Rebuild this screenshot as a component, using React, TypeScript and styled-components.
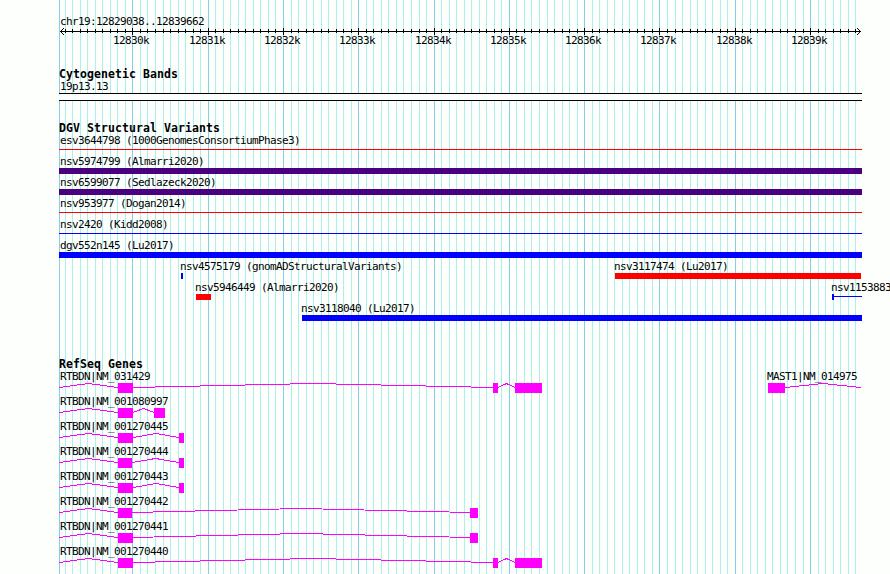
import styled, { createGlobalStyle } from "styled-components"

const REGION_START = 12829038
const REGION_LENGTH = 10625
const PANEL_LEFT = 59
const PANEL_WIDTH = 803

// panel-relative x of a base position
const toX = (position: number) => Math.round(((position - REGION_START) * 800) / REGION_LENGTH) + 1

const ticks = Array.from({ length: 106 }, (_, i) => {
  const position = 12829100 + i * 100
  return { position, x: toX(position), major: position % 1000 === 0 }
})

type Variant = { label: string; start: number; end: number; color: string; thin?: boolean; capped?: boolean }

const variantRows: Variant[][] = [
  [{ label: "esv3644798 (1000GenomesConsortiumPhase3)", start: 0, end: 803, color: "#ff0000", thin: true }],
  [{ label: "nsv5974799 (Almarri2020)", start: 0, end: 803, color: "#4b0082" }],
  [{ label: "nsv6599077 (Sedlazeck2020)", start: 0, end: 803, color: "#4b0082" }],
  [{ label: "nsv953977 (Dogan2014)", start: 0, end: 803, color: "#ff0000", thin: true }],
  [{ label: "nsv2420 (Kidd2008)", start: 0, end: 803, color: "#0000ff", thin: true }],
  [{ label: "dgv552n145 (Lu2017)", start: 0, end: 803, color: "#0000ff" }],
  [
    { label: "nsv4575179 (gnomADStructuralVariants)", start: 122, end: 124, color: "#0000ff" },
    { label: "nsv3117474 (Lu2017)", start: 556, end: 802, color: "#ff0000" },
  ],
  [
    { label: "nsv5946449 (Almarri2020)", start: 137, end: 152, color: "#ff0000" },
    { label: "nsv1153883", start: 773, end: 803, color: "#0000ff", thin: true, capped: true },
  ],
  [{ label: "nsv3118040 (Lu2017)", start: 243, end: 803, color: "#0000ff" }],
]

type Gene = { label: string; start: number; end: number; exons: [number, number][] }

const geneRows: Gene[][] = [
  [
    { label: "RTBDN|NM_031429", start: 0, end: 483, exons: [[59, 74], [434, 439], [456, 483]] },
    { label: "MAST1|NM_014975", start: 709, end: 802, exons: [[709, 726]] },
  ],
  [{ label: "RTBDN|NM_001080997", start: 0, end: 106, exons: [[59, 74], [95, 106]] }],
  [{ label: "RTBDN|NM_001270445", start: 0, end: 125, exons: [[59, 74], [120, 125]] }],
  [{ label: "RTBDN|NM_001270444", start: 0, end: 125, exons: [[59, 73], [120, 125]] }],
  [{ label: "RTBDN|NM_001270443", start: 0, end: 125, exons: [[59, 74], [120, 125]] }],
  [{ label: "RTBDN|NM_001270442", start: 0, end: 419, exons: [[59, 73], [411, 419]] }],
  [{ label: "RTBDN|NM_001270441", start: 0, end: 419, exons: [[59, 74], [411, 419]] }],
  [{ label: "RTBDN|NM_001270440", start: 0, end: 483, exons: [[59, 74], [434, 439], [456, 483]] }],
]

const gapBefore = (row: { start: number; end: number }[], index: number) =>
  row[index].start - (index > 0 ? row[index - 1].end : 0)

export default function App() {
  return (
    <Browser>
      <GlobalStyle />
      <GridLines />
      <Panel>
        <Ruler />
        <Track $space={18}>
          <TrackTitle>Cytogenetic Bands</TrackTitle>
          <Label $shift={1}>19p13.13</Label>
          <Band />
        </Track>
        <Track $space={21}>
          <TrackTitle>DGV Structural Variants</TrackTitle>
          {variantRows.map((row) => (
            <Row key={row[0].label} $height={21}>
              {row.map((variant, index) => (
                <Feature key={variant.label} $gap={gapBefore(row, index)} $width={variant.end - variant.start}>
                  <Label $shift={variant.start === 0 ? 1 : -1}>{variant.label}</Label>
                  <Bar $color={variant.color} $thin={variant.thin} $capped={variant.capped} />
                </Feature>
              ))}
            </Row>
          ))}
        </Track>
        <Track $space={35}>
          <TrackTitle>RefSeq Genes</TrackTitle>
          {geneRows.map((row) => (
            <Row key={row[0].label} $height={25}>
              {row.map((gene, index) => (
                <Feature key={gene.label} $gap={gapBefore(row, index)} $width={gene.end - gene.start}>
                  <Label $shift={gene.start === 0 ? 1 : -1}>{gene.label}</Label>
                  <GeneModel gene={gene} />
                </Feature>
              ))}
            </Row>
          ))}
        </Track>
      </Panel>
    </Browser>
  )
}

function GridLines() {
  return (
    <Grid width={PANEL_WIDTH} height={574} shapeRendering="crispEdges">
      <rect x={0} y={0} width={1} height={574} fill="#87ceeb" />
      {ticks.map(({ position, x, major }) => (
        <rect key={position} x={x} y={0} width={1} height={574} fill={major ? "#87ceeb" : "#afeeee"} />
      ))}
    </Grid>
  )
}

function Ruler() {
  const majors = ticks.filter(({ major }) => major)

  return (
    <RulerBlock>
      <Label $shift={1}>chr19:12829038..12839662</Label>
      <Axis width={PANEL_WIDTH} height={9} shapeRendering="crispEdges">
        <rect x={1} y={4} width={801} height={1} />
        <path d="M1.5 4.5 L5 1 M1.5 4.5 L5 8 M801.5 4.5 L798 1 M801.5 4.5 L798 8" stroke="#000" />
        {ticks.map(({ position, x, major }) => (
          <rect key={position} x={x} y={major ? 1 : 2} width={1} height={major ? 7 : 4} />
        ))}
      </Axis>
      <Numbers>
        {majors.map(({ position, x }, index) => (
          <TickNumber key={position} $gap={x - 19 - (index > 0 ? majors[index - 1].x + 17 : 0)}>
            {position / 1000}k
          </TickNumber>
        ))}
      </Numbers>
    </RulerBlock>
  )
}

function GeneModel({ gene }: { gene: Gene }) {
  const { start, end, exons } = gene
  const stops = [
    ...(start < exons[0][0] ? [[start, start] as [number, number]] : []),
    ...exons,
    ...(end > exons[exons.length - 1][1] ? [[end, end] as [number, number]] : []),
  ]

  return (
    <Model width={end - start} height={10} shapeRendering="crispEdges">
      {stops.slice(1).map((stop, index) => {
        const from = stops[index][1] - start
        const to = stop[0] - start
        return (
          <polyline
            key={from}
            points={`${from},4.5 ${(from + to) / 2},0.5 ${to},4.5`}
            fill="none"
            stroke="#ff00ff"
          />
        )
      })}
      {exons.map(([left, right]) => (
        <rect key={left} x={left - start} y={0} width={right - left} height={10} fill="#ff00ff" />
      ))}
    </Model>
  )
}

const GlobalStyle = createGlobalStyle`
  body {
    margin: 0;
    background: #fdfffc;
  }
`

const Browser = styled.div`
  position: relative;
  width: 890px;
  height: 574px;
  overflow: hidden;
  color: #000;
  background: #fdfffc;
`

const Grid = styled.svg`
  position: absolute;
  top: 0;
  left: ${PANEL_LEFT}px;
`

const Panel = styled.main`
  position: relative;
  display: flex;
  flex-direction: column;

  width: ${PANEL_WIDTH}px;
  padding: 15px 0 0 ${PANEL_LEFT}px;
`

const Label = styled.span<{ $shift: number }>`
  display: block;
  height: 13px;
  margin-left: ${({ $shift }) => $shift}px;

  font-family: "DejaVu Sans Mono", monospace;
  font-size: 11px;
  line-height: 14px;
  letter-spacing: -0.622px;
  white-space: pre;
`

const RulerBlock = styled.header`
  display: flex;
  flex-direction: column;
  height: 35px;
`

const Axis = styled.svg`
  display: block;
  flex: none;
  margin-top: -1px;
`

const Numbers = styled.div`
  display: flex;
  margin-top: -2px;
`

const TickNumber = styled.span<{ $gap: number }>`
  flex: none;
  width: 36px;
  margin-left: ${({ $gap }) => $gap}px;

  font-family: "DejaVu Sans Mono", monospace;
  font-size: 11px;
  line-height: 13px;
  letter-spacing: -0.622px;
`

const Track = styled.section<{ $space: number }>`
  display: flex;
  flex-direction: column;
  padding-top: ${({ $space }) => $space}px;
`

const TrackTitle = styled.h2`
  height: 12px;
  margin: 0;

  font-family: "DejaVu Sans Mono", monospace;
  font-size: 11.5px;
  font-weight: bold;
  line-height: 13px;
  letter-spacing: 0.077px;
  white-space: pre;
`

const Band = styled.div`
  height: 6px;
  border: solid #000;
  border-width: 1px 0;
  background: #fdfffc;
`

const Row = styled.div<{ $height: number }>`
  display: flex;
  height: ${({ $height }) => $height}px;
`

const Feature = styled.div<{ $gap: number; $width: number }>`
  display: flex;
  flex: none;
  flex-direction: column;

  width: ${({ $width }) => $width}px;
  margin-left: ${({ $gap }) => $gap}px;
`

const Bar = styled.div<{ $color: string; $thin?: boolean; $capped?: boolean }>`
  box-sizing: border-box;
  height: 6px;
  border-left: ${({ $capped, $color }) => ($capped ? `2px solid ${$color}` : "none")};
  background: ${({ $thin, $color }) =>
    $thin ? `linear-gradient(${$color}, ${$color}) 0 2px / 100% 1px no-repeat` : $color};
`

const Model = styled.svg`
  display: block;
  flex: none;
`
